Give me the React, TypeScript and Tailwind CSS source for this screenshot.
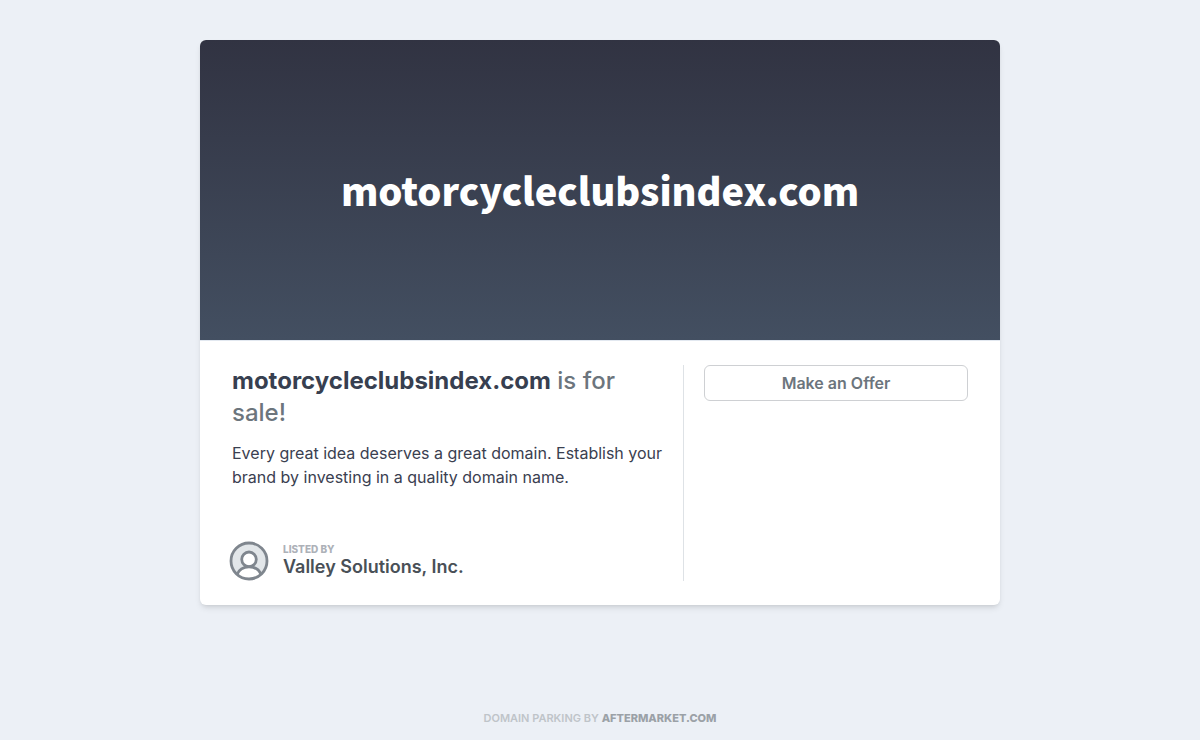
import type { ReactNode } from "react";

const domain = "motorcycleclubsindex.com";
const seller = "Valley Solutions, Inc.";

function SellerAvatar() {
  return (
    <svg viewBox="0 0 40 40" className="size-10 shrink-0" fill="none" aria-hidden="true">
      <circle cx="20" cy="20" r="18" fill="#e2e6e9" />
      <path d="M8 33.500C10 28.500 14.500 25.800 20 25.800s10 2.700 12 7.700C29 36.500 25 38 20 38S11 36.500 8 33.500Z" fill="#fff" />
      <circle cx="20" cy="18.300" r="7.300" fill="#fff" stroke="#7f868e" strokeWidth="2.800" />
      <path d="M8 33.500C10 28.500 14.500 25.800 20 25.800s10 2.700 12 7.700" stroke="#7f868e" strokeWidth="2.800" />
      <circle cx="20" cy="20" r="18" stroke="#7f868e" strokeWidth="2.800" />
    </svg>
  );
}

function Banner({ children }: { children: ReactNode }) {
  return (
    <header className="flex h-[300px] items-center justify-center bg-linear-to-b from-[#313342] to-[#434f61] px-8">
      <h1 className="font-['Noto_Sans_CJK_SC',sans-serif] text-[38px] leading-12 font-black text-white">
        {children}
      </h1>
    </header>
  );
}

export default function App() {
  return (
    <div className="flex min-h-screen flex-col bg-[#ecf0f6] font-[Inter,sans-serif] text-[#3a4050]">
      <main className="mx-auto w-full max-w-[800px] flex-1 pt-10">
        <article className="overflow-hidden rounded-md bg-white shadow-md">
          <Banner>{domain}</Banner>
          <div className="flex border-t border-[#e2e8f0] px-8 py-6">
            <section className="flex min-w-0 flex-1 flex-col pr-5">
              <h2 className="text-2xl leading-8 font-medium text-[#6c757d]">
                <strong className="font-bold text-[#373f50]">{domain}</strong> is for sale!
              </h2>
              <p className="mt-3 text-base leading-6">
                Every great idea deserves a great domain. Establish your brand by investing in a quality
                domain name.
              </p>
              <div className="mt-13 -ml-[3px] flex items-center gap-3.5">
                <SellerAvatar />
                <div>
                  <div className="text-[10px] leading-3 font-extrabold text-[#adb1b8] uppercase">Listed by</div>
                  <div className="text-lg leading-6 font-semibold text-[#495057]">{seller}</div>
                </div>
              </div>
            </section>
            <aside className="w-[285px] shrink-0 border-l border-[#dee2e6] pl-5">
              <button
                type="button"
                className="h-9 w-full rounded-md border border-[#ced0d3] bg-white text-base leading-6 font-semibold text-[#6c757d]"
              >
                Make an Offer
              </button>
            </aside>
          </div>
        </article>
      </main>
      <footer className="pt-8 pb-3 text-center text-[11px] leading-5 font-semibold text-[#bfc4c9] uppercase">
        Domain parking by{" "}
        <a href="#" className="font-extrabold text-[#9ba1a7]">
          Aftermarket.com
        </a>
      </footer>
    </div>
  );
}
